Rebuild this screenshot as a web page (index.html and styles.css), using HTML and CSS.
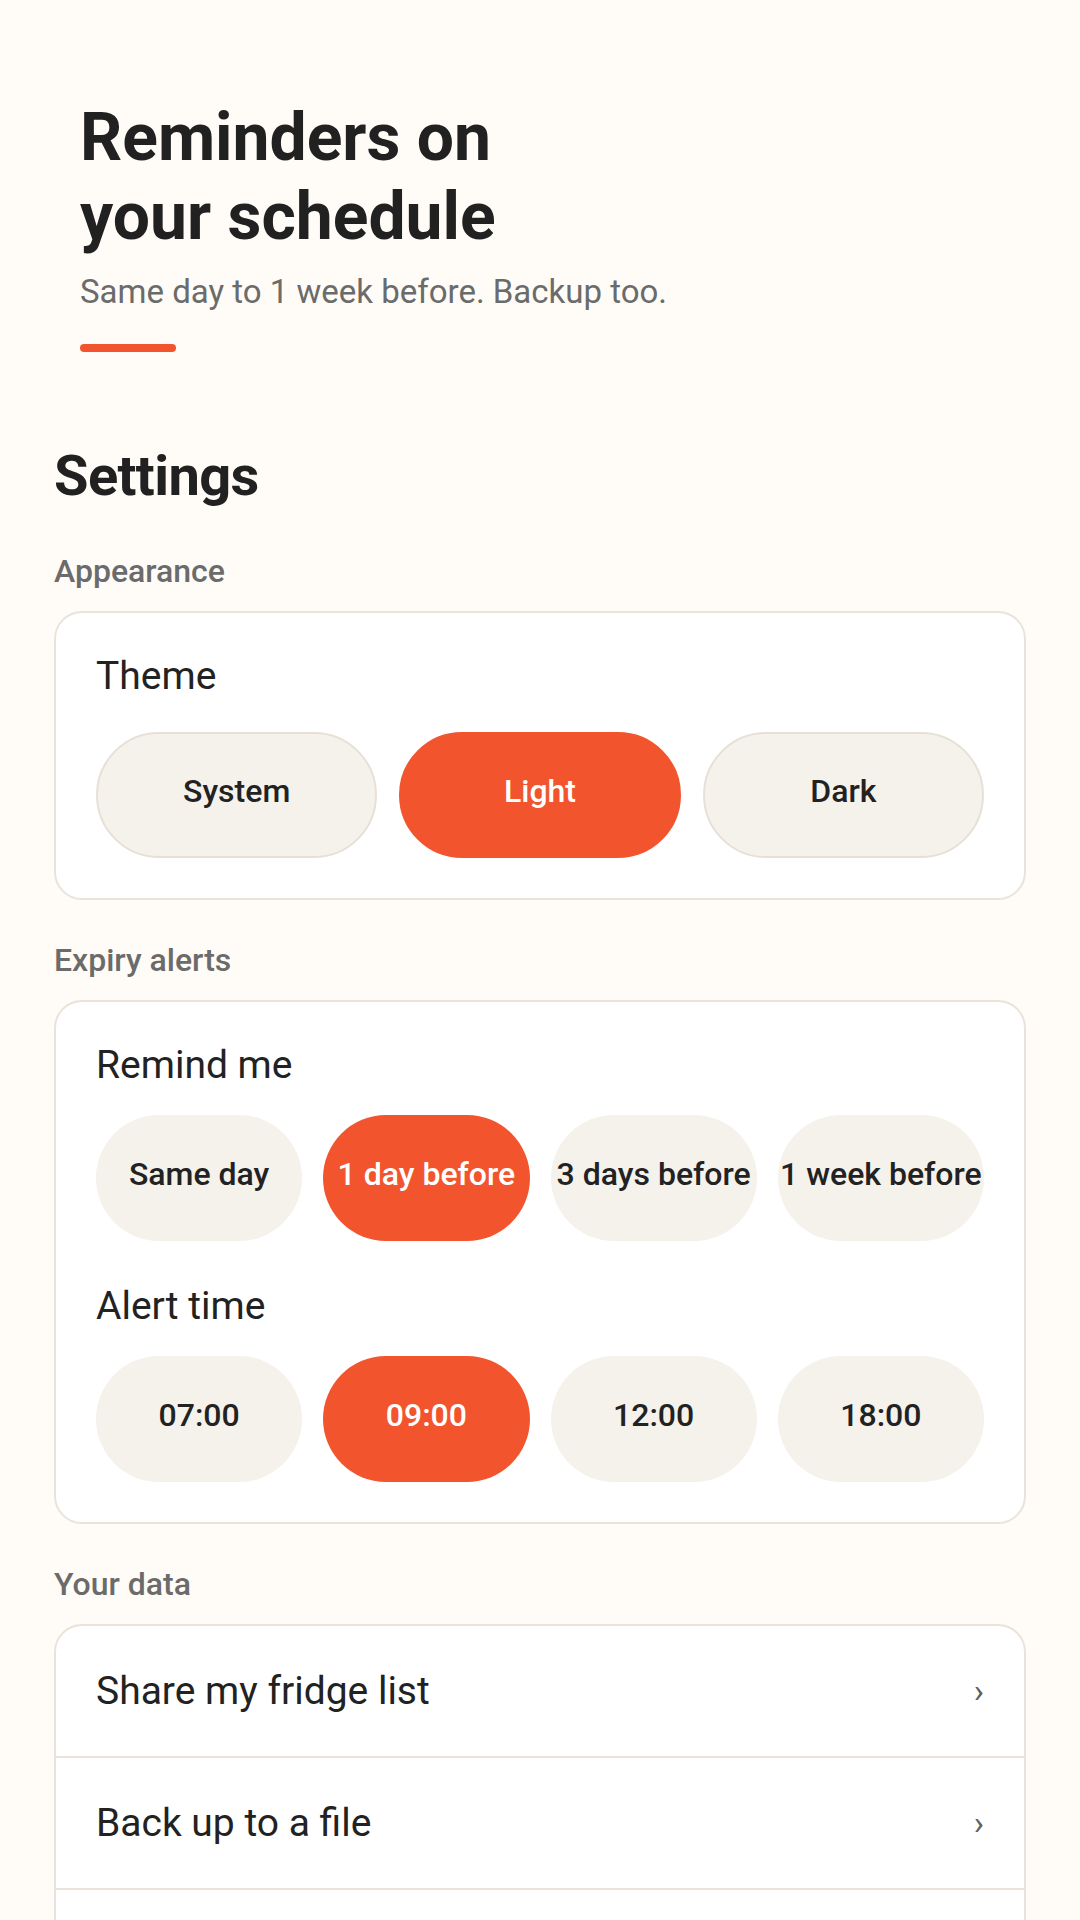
FILE: index.html
```html
<!DOCTYPE html>
<html lang="en">
<head>
  <meta charset="UTF-8" />
  <meta name="viewport" content="width=device-width, initial-scale=1">
  <title>Settings</title>
  <link rel="stylesheet" href="styles.css">
</head>
<body>

  <!-- HERO -->
  <div class="hero">
    <h1>Reminders on<br>your schedule</h1>
    <p class="tagline">Same day to 1 week before. Backup too.</p>
    <div class="accent"></div>
  </div>

  <h2>Settings</h2>

  <h3 class="section">Appearance</h3>
  <div class="card">
    <div class="label">Theme</div>
    <div class="options three bordered">
      <button class="pill">System</button>
      <button class="pill active">Light</button>
      <button class="pill">Dark</button>
    </div>
  </div>

  <h3 class="section">Expiry alerts</h3>
  <div class="card">
    <div class="label">Remind me</div>
    <div class="options four">
      <button class="pill">Same day</button>
      <button class="pill active">1 day before</button>
      <button class="pill">3 days before</button>
      <button class="pill">1 week before</button>
    </div>

    <div class="label spaced">Alert time</div>
    <div class="options four">
      <button class="pill">07:00</button>
      <button class="pill active">09:00</button>
      <button class="pill">12:00</button>
      <button class="pill">18:00</button>
    </div>
  </div>

  <h3 class="section">Your data</h3>
  <div class="card list">
    <div class="row"><span>Share my fridge list</span><span class="chev">&rsaquo;</span></div>
    <div class="row"><span>Back up to a file</span><span class="chev">&rsaquo;</span></div>
    <div class="row"><span>Restore from a file</span><span class="chev">&rsaquo;</span></div>
  </div>

</body>
</html>
```

FILE: styles.css
```css
body {
  font-family: Roboto, "Noto Sans", sans-serif;
  background: #fffcf7;
  color: #222;
  margin: 0;
  padding: 0 54px 60px;
}

.hero {
  padding: 98px 26px 0;
}

h1 {
  font-size: 66px;
  line-height: 79px;
  font-weight: 700;
  margin: 0;
  color: #212121;
}

.tagline {
  font-size: 33px;
  line-height: 40px;
  color: #6b6b6b;
  margin: 16px 0 0;
}

.accent {
  width: 96px;
  height: 8px;
  border-radius: 4px;
  background: #f2552e;
  margin-top: 32px;
}

h2 {
  font-size: 56px;
  line-height: 66px;
  font-weight: 700;
  letter-spacing: -0.6px;
  margin: 91px 0 0;
  color: #212121;
}

.section {
  font-size: 32px;
  line-height: 38px;
  font-weight: 500;
  color: #6b6b6b;
  margin: 41px 0 21px;
}

h2 + .section {
  margin-top: 43px;
}

.card {
  background: white;
  border: 2px solid #e9e3db;
  border-radius: 28px;
  padding: 40px;
}

.label {
  font-size: 39px;
  line-height: 46px;
}

.label.spaced {
  margin-top: 42px;
}

.options {
  display: grid;
  gap: 21px;
  margin-top: 27px;
}

.options.three {
  grid-template-columns: repeat(3, 1fr);
  gap: 22px;
  margin-top: 33px;
}

.options.four {
  grid-template-columns: repeat(4, 1fr);
}

.pill {
  box-sizing: border-box;
  height: 126px;
  padding: 0 0 8px;
  border: none;
  border-radius: 63px;
  background: #f5f1eb;
  font-family: inherit;
  font-size: 32px;
  font-weight: 500;
  color: #222;
  white-space: nowrap;
  display: flex;
  align-items: center;
  justify-content: center;
  overflow: visible;
}

.bordered .pill {
  border: 2px solid #e7e0d7;
}

.pill.active,
.bordered .pill.active {
  background: #f2552e;
  border-color: #f2552e;
  color: white;
}

.card.list {
  padding: 0;
}

.row {
  height: 130px;
  padding: 0 40px;
  display: flex;
  align-items: center;
  justify-content: space-between;
  font-size: 39px;
  border-bottom: 2px solid #e9e3db;
}

.row:last-child {
  border-bottom: none;
}

.chev {
  font-size: 34px;
  color: #5f5f5f;
}
```
